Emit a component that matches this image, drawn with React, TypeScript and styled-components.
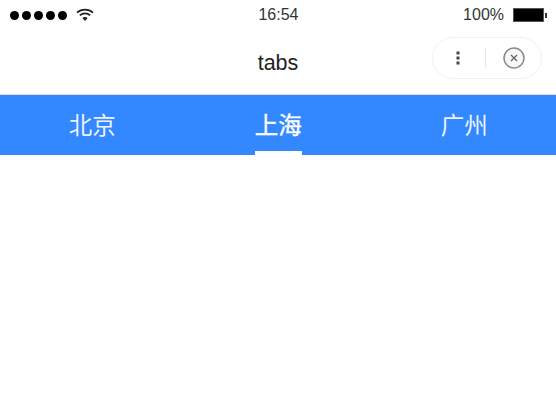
import React from 'react'
import styled, { createGlobalStyle } from 'styled-components'

const TABS = ['北京', '上海', '广州']

const GlobalStyle = createGlobalStyle`
  html, body {
    margin: 0;
    padding: 0;
    background: #ffffff;
  }
`

const Page = styled.div`
  width: 556px;
  height: 416px;
  overflow: hidden;
  background: #ffffff;
  font-family: "Liberation Sans", Arial, "Noto Sans CJK SC", sans-serif;
`

const StatusBar = styled.div`
  display: grid;
  grid-template-columns: 1fr auto 1fr;
  align-items: center;
  height: 30px;
  padding: 0 9px 0 10px;
  font-size: 16px;
  color: #333333;
`

const StatusLeft = styled.div`
  display: flex;
  align-items: center;
  gap: 9px;
`

const Dots = styled.div`
  display: flex;
  gap: 3px;
`

const Dot = styled.span`
  width: 9px;
  height: 9px;
  border-radius: 50%;
  background: #000000;
`

const StatusRight = styled.div`
  display: flex;
  align-items: center;
  justify-content: flex-end;
  gap: 9px;
`

const Battery = styled.div`
  display: flex;
  align-items: center;
`

const BatteryBody = styled.span`
  width: 31px;
  height: 14px;
  box-sizing: border-box;
  border: 1px solid #555555;
  background: #000000;
`

const BatteryTip = styled.span`
  width: 2px;
  height: 5px;
  margin-left: 1px;
  background: #333333;
`

const NavBar = styled.div`
  position: relative;
  display: flex;
  align-items: center;
  justify-content: center;
  height: 65px;
  box-sizing: border-box;
  border-bottom: 1px solid #dcdcdc;
`

const NavTitle = styled.span`
  font-size: 21.5px;
  color: #222222;
  margin-top: 3px;
`

const Capsule = styled.div`
  position: absolute;
  right: 14px;
  top: 7px;
  display: flex;
  align-items: center;
  width: 110px;
  height: 42px;
  box-sizing: border-box;
  border: 1px solid #f1f1f1;
  border-radius: 21px;
`

const CapsuleSide = styled.div`
  flex: 1;
  display: flex;
  align-items: center;
  justify-content: center;
`

const MoreSide = styled(CapsuleSide)`
  flex: 0 0 52px;
  box-sizing: border-box;
  padding-right: 2px;
`

const CapsuleDivider = styled.span`
  width: 1px;
  height: 20px;
  background: #e6e6e6;
`

const TabBar = styled.div`
  display: grid;
  grid-template-columns: repeat(3, 186px);
  justify-content: center;
  height: 60px;
  background: #3388ff;
`

const Tab = styled.div`
  display: flex;
  justify-content: center;
  padding-left: 0.6px;
`

const TabLabel = styled.div<{ $active: boolean }>`
  display: flex;
  align-items: center;
  box-sizing: border-box;
  height: 100%;
  padding-top: 2px;
  font-size: 23.5px;
  color: #ffffff;
  opacity: ${(p) => (p.$active ? 1 : 0.9)};
  -webkit-text-stroke: ${(p) => (p.$active ? '0.4px #ffffff' : '0')};
  border-bottom: 4px solid ${(p) => (p.$active ? '#ffffff' : 'transparent')};
`

function WifiIcon() {
  return (
    <svg width="18" height="14" viewBox="0 0 18 14">
      <path d="M1 4.6C5.6.6 12.4.6 17 4.6" fill="none" stroke="#222" strokeWidth="1.8" />
      <path d="M3.8 7.4c3-2.6 7.4-2.6 10.4 0" fill="none" stroke="#222" strokeWidth="1.8" />
      <path d="M6.4 10c1.5-1.3 3.7-1.3 5.2 0L9 13z" fill="#222" />
    </svg>
  )
}

function MoreIcon() {
  return (
    <svg width="4" height="14" viewBox="0 0 4 14">
      <rect x="0.5" y="0.5" width="3" height="3" fill="#444" />
      <rect x="0.5" y="5.5" width="3" height="3" fill="#444" />
      <rect x="0.5" y="10.5" width="3" height="3" fill="#444" />
    </svg>
  )
}

function CloseIcon() {
  return (
    <svg width="24" height="24" viewBox="0 0 24 24">
      <circle cx="12" cy="12" r="10" fill="#f7f7f7" stroke="#8a8a8a" strokeWidth="1.5" />
      <path d="M9 9l6 6M15 9l-6 6" fill="none" stroke="#666" strokeWidth="1.4" />
    </svg>
  )
}

export default function App() {
  return (
    <Page>
      <GlobalStyle />
      <StatusBar>
        <StatusLeft>
          <Dots>
            {[0, 1, 2, 3, 4].map((i) => (
              <Dot key={i} />
            ))}
          </Dots>
          <WifiIcon />
        </StatusLeft>
        <span>16:54</span>
        <StatusRight>
          <span>100%</span>
          <Battery>
            <BatteryBody />
            <BatteryTip />
          </Battery>
        </StatusRight>
      </StatusBar>
      <NavBar>
        <NavTitle>tabs</NavTitle>
        <Capsule>
          <MoreSide>
            <MoreIcon />
          </MoreSide>
          <CapsuleDivider />
          <CapsuleSide>
            <CloseIcon />
          </CapsuleSide>
        </Capsule>
      </NavBar>
      <TabBar>
        {TABS.map((label, i) => (
          <Tab key={label}>
            <TabLabel $active={i === 1}>{label}</TabLabel>
          </Tab>
        ))}
      </TabBar>
    </Page>
  )
}
